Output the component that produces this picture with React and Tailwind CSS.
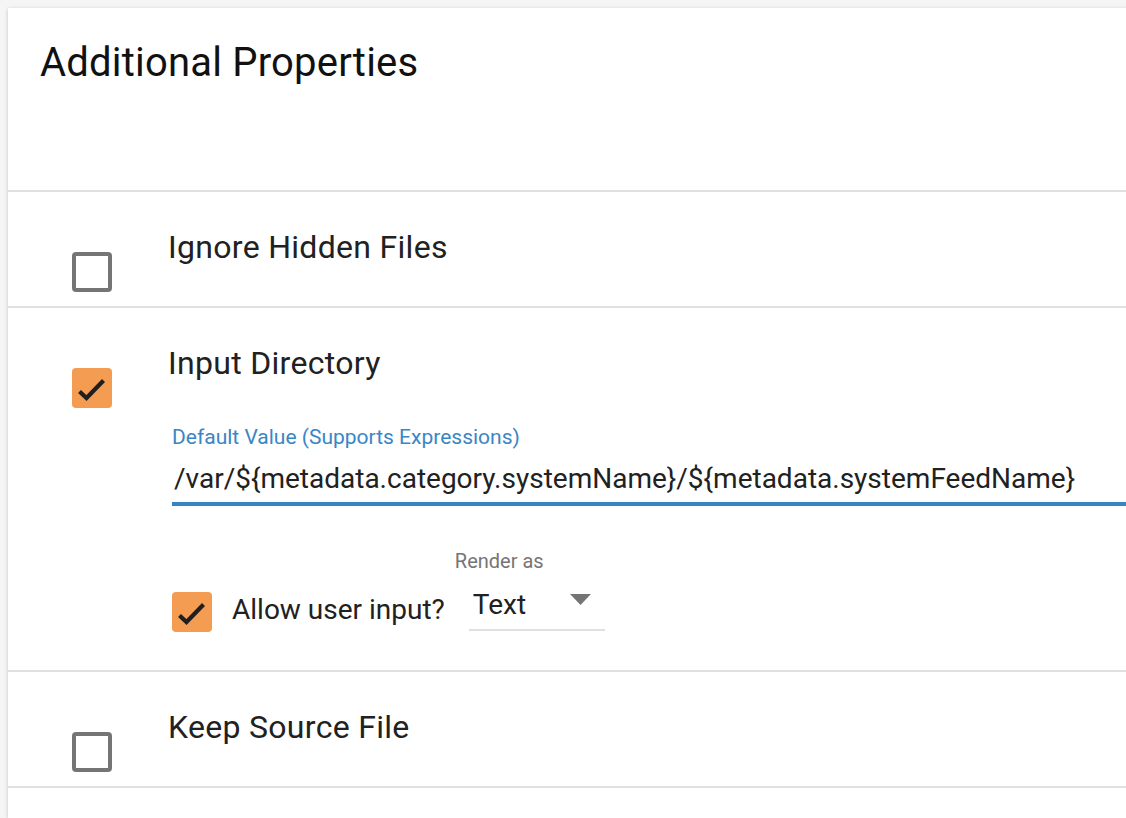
import React from "react";

const Checkbox = ({ checked, className = "" }) =>
  checked ? (
    <div className={`w-[40px] h-[40px] rounded-[4px] bg-[#f39c52] shrink-0 ${className}`}>
      <svg width="40" height="40" viewBox="0 0 40 40">
        <path
          d="M7.5 23.5 L14.5 30 L31.5 12.5"
          fill="none"
          stroke="#1f1f1f"
          strokeWidth="4.2"
          strokeLinecap="butt"
        />
      </svg>
    </div>
  ) : (
    <div
      className={`w-[40px] h-[40px] rounded-[4px] border-[4px] border-[#757575] bg-white shrink-0 ${className}`}
    />
  );

const PropertyRow = ({ label, checked, children }) => (
  <div className="flex border-b-2 border-[#e0e0e0]">
    <div className="pl-[64px] w-[164px] shrink-0">
      <Checkbox checked={checked} className="mt-[60px] mb-[14px]" />
    </div>
    <div className="flex-1 pt-[39px]">
      <div className="text-[32px] leading-[32px] tracking-[0.3px] text-[#212121] -ml-[4px]">{label}</div>
      {children}
    </div>
  </div>
);

export default function App() {
  return (
    <div className="min-h-screen bg-[#f5f5f5] overflow-hidden pl-[8px] pt-[8px] font-['Roboto',sans-serif]">
      <div className="bg-white w-[1200px] min-h-[810px] shadow-[0_1px_4px_rgba(0,0,0,0.2)]">
        <div className="h-[184px] pl-[33px] pt-[35px] border-b-2 border-[#e0e0e0]">
          <h1 className="text-[40px] leading-[40px] tracking-[0.2px] text-[#111] -ml-[1px]">Additional Properties</h1>
        </div>

        <PropertyRow label="Ignore Hidden Files" />

        <PropertyRow label="Input Directory" checked>
          <div className="mt-[46px] text-[21px] leading-[24px] text-[#3a86c4]">
            Default Value (Supports Expressions)
          </div>
          <div className="mt-[14px] pb-[7px] border-b-4 border-[#3784c3] text-[28px] leading-[32px] text-[#212121] pl-[2px]">
            /var/${"{"}metadata.category.systemName{"}"}/${"{"}metadata.systemFeedName{"}"}
          </div>
          <div className="flex items-start mt-[43px] pb-[38px]">
            <Checkbox checked className="mt-[43px]" />
            <div className="ml-[20px] mt-[45px] text-[28px] leading-[32px] text-[#212121]">
              Allow user input?
            </div>
            <div className="ml-[10px] flex flex-col">
              <div className="text-[20px] leading-[24px] text-[#757575]">Render as</div>
              <div className="ml-[14px] mt-[14px] w-[136px] pb-[8px] border-b-2 border-[#e0e0e0] flex items-start justify-between pl-[4px] pr-[14px]">
                <span className="mt-[2px] text-[28px] leading-[32px] text-[#212121]">Text</span>
                <svg width="21" height="11" viewBox="0 0 21 11" className="mt-[7px]">
                  <path d="M0 0 L21 0 L10.5 11 Z" fill="#757575" />
                </svg>
              </div>
            </div>
          </div>
        </PropertyRow>

        <PropertyRow label="Keep Source File" />
      </div>
    </div>
  );
}
